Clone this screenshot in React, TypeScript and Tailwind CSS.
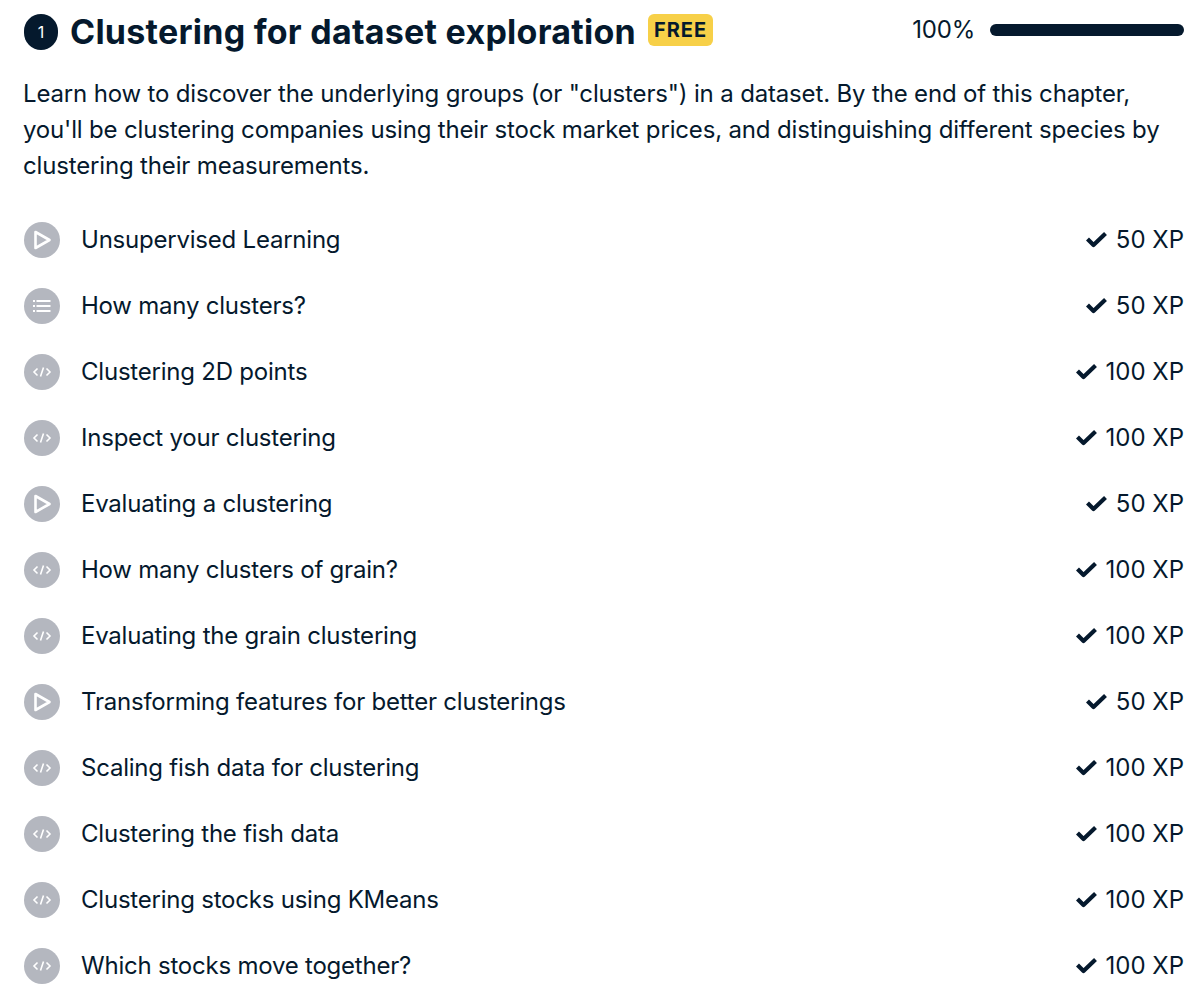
import React from 'react';

type Kind = 'video' | 'list' | 'code';

const rows: { title: string; kind: Kind; xp: number }[] = [
  { title: 'Unsupervised Learning', kind: 'video', xp: 50 },
  { title: 'How many clusters?', kind: 'list', xp: 50 },
  { title: 'Clustering 2D points', kind: 'code', xp: 100 },
  { title: 'Inspect your clustering', kind: 'code', xp: 100 },
  { title: 'Evaluating a clustering', kind: 'video', xp: 50 },
  { title: 'How many clusters of grain?', kind: 'code', xp: 100 },
  { title: 'Evaluating the grain clustering', kind: 'code', xp: 100 },
  { title: 'Transforming features for better clusterings', kind: 'video', xp: 50 },
  { title: 'Scaling fish data for clustering', kind: 'code', xp: 100 },
  { title: 'Clustering the fish data', kind: 'code', xp: 100 },
  { title: 'Clustering stocks using KMeans', kind: 'code', xp: 100 },
  { title: 'Which stocks move together?', kind: 'code', xp: 100 },
];

function ExerciseIcon({ kind }: { kind: Kind }) {
  return (
    <div className="flex h-9 w-9 shrink-0 items-center justify-center rounded-full bg-[#b4b7bf]">
      <svg width="36" height="36" viewBox="0 0 36 36" fill="none" stroke="#fff">
        {kind === 'video' && <path d="M11.5 10 L25.5 18 L11.5 26 Z" strokeWidth="2.6" strokeLinejoin="round" />}
        {kind === 'list' && <path d="M9 13h2M12.5 13h14M9 18h2M12.5 18h14M9 23h2M12.5 23h14" strokeWidth="2" />}
        {kind === 'code' && (
          <path
            d="M13.5 14.5 L10 18 L13.5 21.5 M22.5 14.5 L26 18 L22.5 21.5 M19.5 13.5 L16.5 22.5"
            strokeWidth="1.6"
          />
        )}
      </svg>
    </div>
  );
}

export default function App() {
  return (
    <div className="h-[998px] w-[1200px] overflow-hidden bg-white pl-6 pr-4 pt-[14px] font-['Inter',sans-serif] text-[#05192d]">
      {/* Cabecalho do capitulo */}
      <div className="flex h-9 items-center">
        <div className="flex h-9 w-[34px] items-center justify-center rounded-full bg-[#05192d] text-base text-white">
          1
        </div>
        <h2 className="ml-3 text-[34px] font-bold leading-9 tracking-[0.25px]">Clustering for dataset exploration</h2>
        <span className="mb-1 ml-3 rounded-md bg-[#f7d048] px-[6px] text-xl font-bold leading-8 tracking-[1px]">
          FREE
        </span>
        <span className="mb-1 ml-auto text-2xl tracking-[-0.2px]">100%</span>
        <div className="mb-1 ml-[15px] h-3 w-[194px] rounded-full bg-[#05192d]" />
      </div>

      <p className="-ml-px mt-[26px] w-[1150px] text-2xl leading-9 tracking-[-0.16px]">
        Learn how to discover the underlying groups (or "clusters") in a dataset. By the end of this chapter, you'll be
        clustering companies using their stock market prices, and distinguishing different species by clustering their
        measurements.
      </p>

      <ul className="mt-[23px]">
        {rows.map((row) => (
          <li key={row.title} className="flex h-[66px] items-center">
            <ExerciseIcon kind={row.kind} />
            <span className="ml-[21px] text-2xl tracking-[-0.22px]">{row.title}</span>
            <span className="ml-auto flex items-center gap-2 text-2xl">
              <svg width="22" height="18" viewBox="0 0 22 18" fill="none" stroke="#05192d">
                <path d="M1.5 8 L7.5 14 L19.5 2.5" strokeWidth="4.2" strokeLinejoin="round" />
              </svg>
              {row.xp} XP
            </span>
          </li>
        ))}
      </ul>
    </div>
  );
}
